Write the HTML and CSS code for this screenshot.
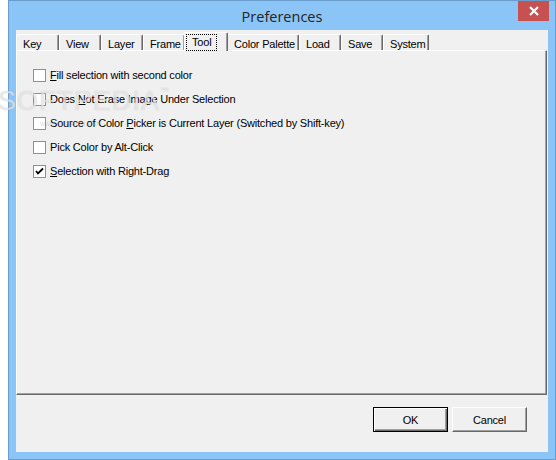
FILE: index.html
```html
<!DOCTYPE html>
<html>
<head>
<meta charset="utf-8">
<title>Preferences</title>
<link rel="stylesheet" href="styles.css">
</head>
<body>
<div class="window">
  <div class="titlebar">
    <span class="title">Preferences</span>
    <div class="close">
      <svg width="10" height="10" viewBox="0 0 10 10"><path d="M1 1 L9 9 M9 1 L1 9" stroke="#fff" stroke-width="2.2" fill="none"/></svg>
    </div>
  </div>
  <div class="client">
    <div class="tabcontrol">
      <div class="tabrow">
        <span class="tab first">Key</span>
        <span class="tab">View</span>
        <span class="tab">Layer</span>
        <span class="tab">Frame</span>
        <span class="tab active"><span class="focus">Tool</span></span>
        <span class="tab">Color Palette</span>
        <span class="tab">Load</span>
        <span class="tab">Save</span>
        <span class="tab">System</span>
      </div>
      <div class="panel">
        <label class="option"><span class="box"></span><span><u>F</u>ill selection with second color</span></label>
        <label class="option"><span class="box"></span><span>Does <u>N</u>ot Erase Image Under Selection</span></label>
        <label class="option"><span class="box"></span><span>Source of Color <u>P</u>icker is Current Layer (Switched by Shift-key)</span></label>
        <label class="option"><span class="box"></span><span>Pick Color by Alt-Click</span></label>
        <label class="option"><span class="box checked"><svg width="9" height="9" viewBox="0 0 9 9"><path d="M1 4 L3 6.5 L8 1.5" stroke="#000" stroke-width="1.8" fill="none"/></svg></span><span><u>S</u>election with Right-Drag</span></label>
      </div>
    </div>
    <div class="buttons">
      <div class="btn default"><span>OK</span></div>
      <div class="btn"><span>Cancel</span></div>
    </div>
  </div>
</div>
<div class="watermark">SOFTPEDIA<span class="tm">™</span></div>
<div class="watermark-url">www.softpedia.com</div>
</body>
</html>
```

FILE: styles.css
```css
* { box-sizing: border-box; }
html, body { margin: 0; padding: 0; }
body {
  background: #ffffff;
  width: 556px;
  height: 460px;
  overflow: hidden;
  position: relative;
  font-family: "Liberation Sans", Arial, sans-serif;
  font-size: 11px;
  letter-spacing: -0.2px;
  color: #000;
}
.window {
  margin-left: 8px;
  width: 548px;
  height: 460px;
  background: #8bc4f6;
  border: 1px solid #6a9dcc;
  display: flex;
  flex-direction: column;
}
.titlebar {
  height: 29px;
  position: relative;
  display: flex;
  align-items: center;
  justify-content: center;
}
.title {
  font-family: "Open Sans", "Noto Sans", sans-serif;
  font-size: 14.5px;
  letter-spacing: 0;
  color: #242424;
  margin-top: 1px;
}
.close {
  position: absolute;
  right: 6px;
  top: 0;
  width: 31px;
  height: 20px;
  background: #c75050;
  display: flex;
  align-items: center;
  justify-content: center;
}
.client {
  margin: 0 7px 7px 7px;
  flex: 1;
  background: #f0f0f0;
  display: flex;
  flex-direction: column;
}
.tabcontrol {
  padding-top: 2px;
  display: flex;
  flex-direction: column;
}
.tabrow {
  display: flex;
  align-items: flex-end;
  height: 18px;
}
.tab {
  height: 16px;
  min-width: 42px;
  padding: 3px 3px 0 6px;
  background: #f0f0f0;
  border-top: 1px solid #ffffff;
  border-left: 1px solid #ffffff;
  border-right: 1px solid #696969;
  box-shadow: inset -1px 0 0 #a0a0a0;
  border-radius: 2px 2px 0 0;
  white-space: nowrap;
  line-height: 12px;
}
.tab.first { min-width: 43px; }
.tab.active {
  height: 19px;
  margin: 0 -1px -1px -1px;
  padding: 1px 2px 0 1px;
  min-width: 44px;
  position: relative;
  z-index: 2;
}
.focus {
  display: inline-block;
  border: 1px dotted #000;
  padding: 1px 5px 2px 5px;
  line-height: 12px;
}
.panel {
  height: 345px;
  margin-right: 1px;
  border-top: 1px solid #ffffff;
  border-left: 1px solid #ffffff;
  border-right: 1px solid #696969;
  border-bottom: 1px solid #696969;
  box-shadow: inset -1px -1px 0 #a0a0a0;
  padding: 12px 0 0 16px;
  display: flex;
  flex-direction: column;
}
.option {
  height: 24px;
  display: flex;
  align-items: center;
  gap: 4px;
}
.box {
  width: 13px;
  height: 13px;
  background: #ffffff;
  border: 1px solid #8e8f8f;
  display: flex;
  align-items: center;
  justify-content: center;
}
u { text-decoration: underline; text-underline-offset: 1px; }
.buttons {
  display: flex;
  justify-content: flex-end;
  gap: 4px;
  padding: 12px 21px 0 0;
}
.btn {
  width: 75px;
  height: 25px;
  background: #f0f0f0;
  border-top: 1px solid #ffffff;
  border-left: 1px solid #ffffff;
  border-right: 1px solid #696969;
  border-bottom: 1px solid #696969;
  box-shadow: inset -1px -1px 0 #a0a0a0;
  display: flex;
  align-items: center;
  justify-content: center;
}
.btn.default {
  border: 1px solid #000;
  box-shadow: inset 1px 1px 0 #ffffff, inset -1px -1px 0 #696969, inset -2px -2px 0 #a0a0a0;
}
.watermark {
  position: absolute;
  left: -2px;
  top: 86px;
  font-family: "Liberation Sans", Arial, sans-serif;
  font-size: 27px;
  letter-spacing: 1px;
  color: rgba(255, 255, 255, 0.6);
  text-shadow: 0 0 1px rgba(110, 110, 110, 0.4);
  pointer-events: none;
}
.watermark .tm { font-size: 9px; vertical-align: top; }
.watermark-url {
  position: absolute;
  left: 40px;
  top: 120px;
  font-size: 7px;
  letter-spacing: 0;
  color: rgba(150, 150, 150, 0.35);
  pointer-events: none;
}
```
